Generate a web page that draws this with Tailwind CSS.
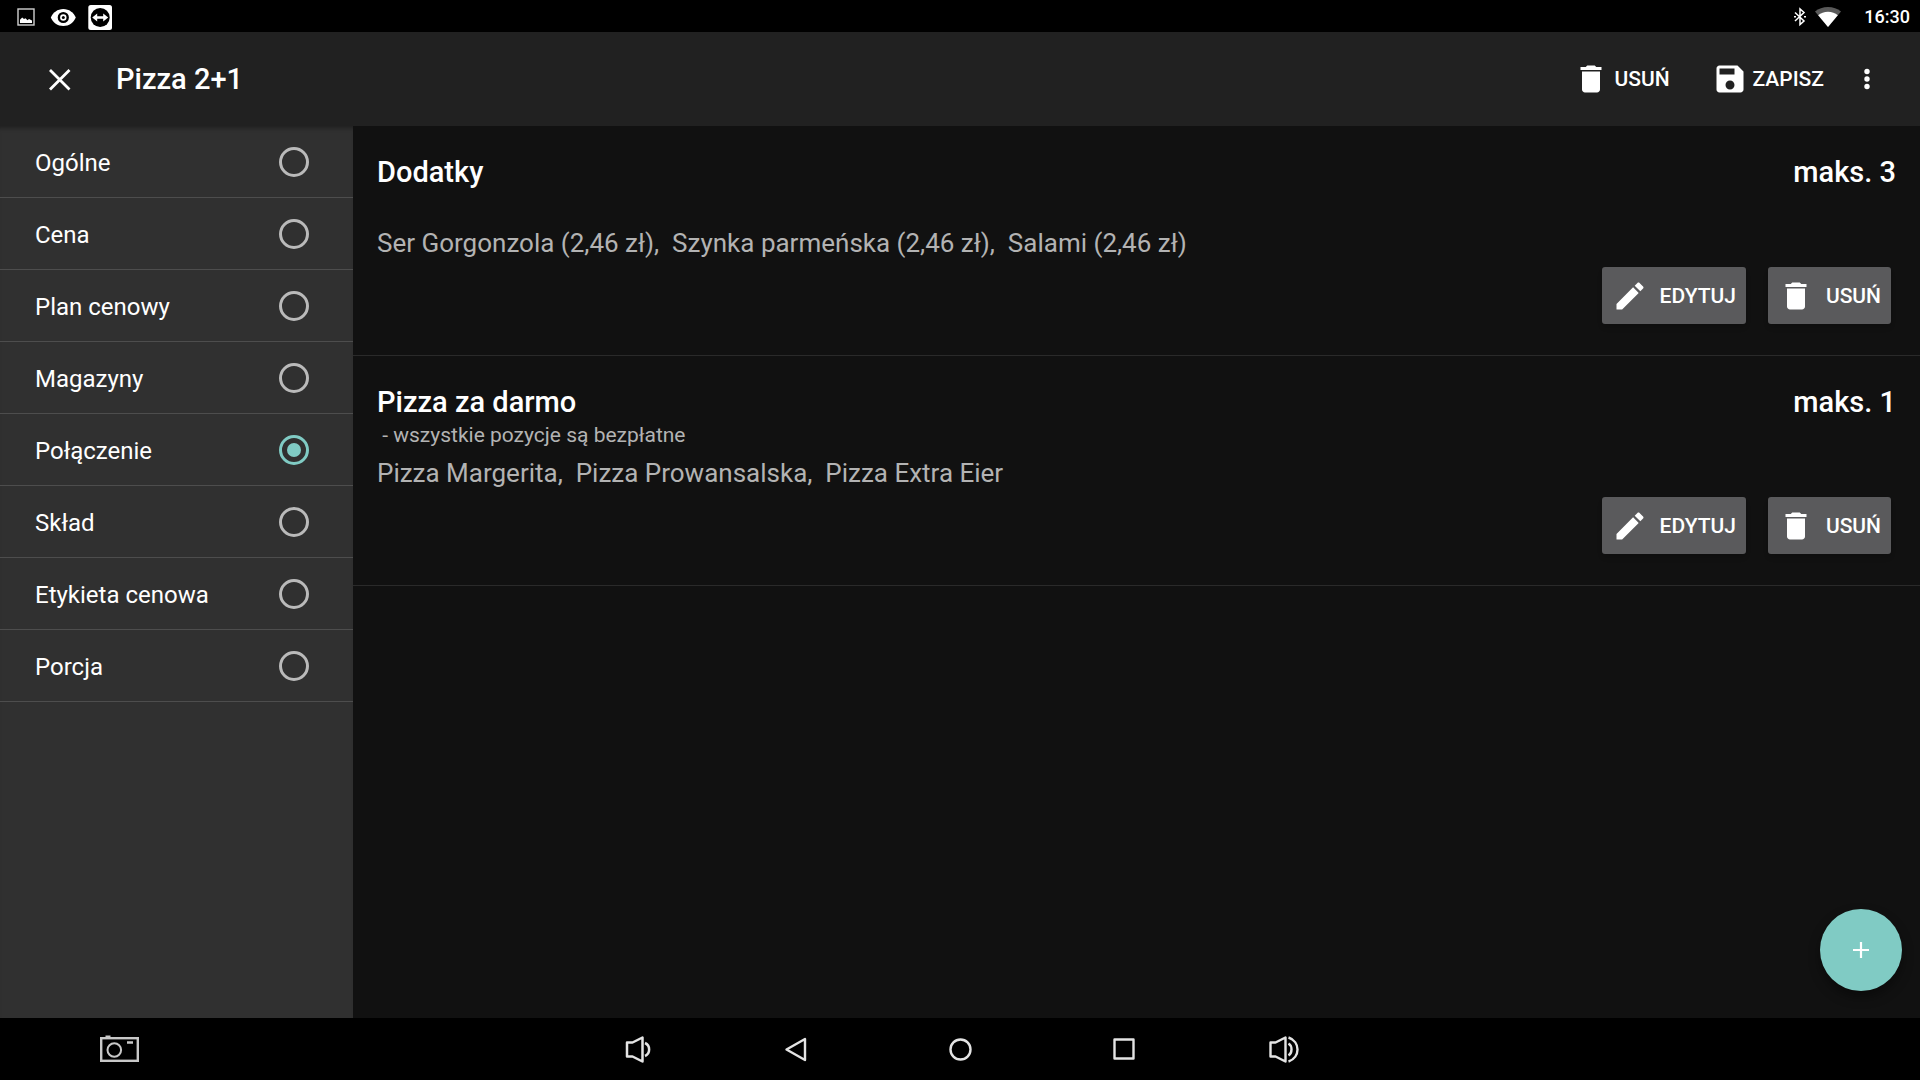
<!DOCTYPE html>
<html lang="pl">
<head>
    <meta charset="UTF-8">
    <meta name="viewport" content="width=device-width, initial-scale=1.0">
    <title>Pizza 2+1</title>
    <script src="https://cdn.jsdelivr.net/npm/@tailwindcss/browser@4"></script>
</head>
<body class="h-screen flex flex-col overflow-hidden bg-[#111111] text-white font-['Roboto',sans-serif]">
    <!-- Shared icons -->
    <svg class="hidden">
        <symbol id="icon-delete" viewBox="0 0 24 24"><path d="M6 19c0 1.1.9 2 2 2h8c1.1 0 2-.9 2-2V7H6v12zM19 4h-3.5l-1-1h-5l-1 1H5v2h14V4z"/></symbol>
        <symbol id="icon-edit" viewBox="0 0 24 24"><path d="M3 17.25V21h3.75L17.81 9.94l-3.75-3.75L3 17.25zM20.71 7.04c.39-.39.39-1.02 0-1.41l-2.34-2.34c-.39-.39-1.02-.39-1.41 0l-1.83 1.83 3.75 3.75 1.83-1.83z"/></symbol>
        <symbol id="icon-save" viewBox="0 0 24 24"><path d="M17 3H5c-1.11 0-2 .9-2 2v14c0 1.1.89 2 2 2h14c1.1 0 2-.9 2-2V7l-4-4zm-5 16c-1.66 0-3-1.34-3-3s1.34-3 3-3 3 1.34 3 3-1.34 3-3 3zm3-10H5V5h10v4z"/></symbol>
    </svg>

    <!-- Status bar -->
    <div class="h-8 shrink-0 bg-black flex items-center justify-between pt-px pl-4 pr-[10px]">
        <div class="flex items-center gap-3">
            <svg class="w-5 h-5" viewBox="0 0 20 20" fill="none">
                <rect x="2" y="2" width="16" height="16" stroke="#d0d0d0" stroke-width="1.4"/>
                <path fill="#fff" d="M4 16v-3.200l2.200-2.200 1.800 1.400 1.500-.8 2 2 1.500-1.200 3 1.500V16z"/>
            </svg>
            <svg class="w-7 h-7" viewBox="0 0 28 28">
                <path fill="#fff" d="M2.800 14.500C5 9.500 9.500 6 15.300 6s10.300 3.500 12.500 8.500C25.600 19.500 21.100 23 15.300 23S5 19.500 2.800 14.500z"/>
                <circle cx="15.300" cy="14.500" r="4.400" fill="#fff" stroke="#000" stroke-width="2.400"/>
                <circle cx="15.300" cy="14.500" r="1.500" fill="#000"/>
            </svg>
            <svg class="w-6 h-7" viewBox="0 0 24 28">
                <rect x="0.300" y="2" width="23.700" height="25" rx="2.500" fill="#fff"/>
                <circle cx="12.200" cy="14.500" r="9.500" fill="#000"/>
                <path fill="#fff" d="M4.200 14.500l5-4v2.700h6v-2.700l5 4-5 4v-2.700h-6v2.700z"/>
            </svg>
        </div>
        <div class="flex items-center">
            <svg class="w-3 h-5" viewBox="0 0 12 20" fill="none" stroke="#fff" stroke-width="1.500">
                <path d="M1 5.500l9 8.500-4 3.500V2L10 5.500l-9 8.500"/>
                <path d="M0 9.800h2M10 9.800h2"/>
            </svg>
            <svg class="w-7 h-6 ml-2" viewBox="0 0 28 24">
                <path fill="#5a5a5a" d="M14 22L1 6.500C4.500 3.600 9 2 14 2s9.500 1.600 13 4.500z"/>
                <path fill="#fff" d="M14 22L4.200 10.200C6.800 8 10.200 6.800 14 6.800s7.200 1.200 9.800 3.400z"/>
            </svg>
            <span class="ml-[22px] text-[18px] leading-6 font-medium">16:30</span>
        </div>
    </div>

    <!-- App bar -->
    <header class="h-[94px] shrink-0 bg-[#212121] flex items-center pl-11 pr-[38px]">
        <button aria-label="Zamknij">
            <svg class="w-8 h-8" viewBox="0 0 32 32" stroke="#fff" stroke-width="2.800"><path d="M6 7l19.500 19.500M25.500 7L6 26.500"/></svg>
        </button>
        <h1 class="ml-10 pt-[2px] text-[29px] font-medium">Pizza 2+1</h1>
        <div class="ml-auto flex items-center">
            <button class="flex items-center gap-[5px] text-[21px] font-medium">
                <svg class="w-9 h-9 fill-white"><use href="#icon-delete"/></svg>
                <span class="pt-[2px]">USUŃ</span>
            </button>
            <button class="ml-[42px] flex items-center gap-[5px] text-[21px] font-medium">
                <svg class="w-9 h-9 fill-white"><use href="#icon-save"/></svg>
                <span class="pt-[2px]">ZAPISZ</span>
            </button>
            <button class="ml-7" aria-label="Więcej">
                <svg class="w-[30px] h-[30px]" viewBox="0 0 30 30" fill="#fff"><circle cx="15" cy="7.500" r="2.700"/><circle cx="15" cy="15" r="2.700"/><circle cx="15" cy="22.500" r="2.700"/></svg>
            </button>
        </div>
    </header>

    <div class="flex-1 flex min-h-0">
        <!-- Sidebar -->
        <nav class="w-[353px] shrink-0 bg-[#303030] text-[24px] shadow-[inset_0_5px_4px_-3px_rgba(0,0,0,0.35)]">
            <label class="h-18 flex items-center justify-between pl-[35px] pr-11 border-b border-[#4d4d4d]">
                <span class="pt-[2px]">Ogólne</span>
                <input type="radio" name="tab" class="appearance-none w-[30px] h-[30px] rounded-full border-3 border-[#bababa] p-[5px] bg-clip-content checked:border-[#80cbc4] checked:bg-[#80cbc4]">
            </label>
            <label class="h-18 flex items-center justify-between pl-[35px] pr-11 border-b border-[#4d4d4d]">
                <span class="pt-[2px]">Cena</span>
                <input type="radio" name="tab" class="appearance-none w-[30px] h-[30px] rounded-full border-3 border-[#bababa] p-[5px] bg-clip-content checked:border-[#80cbc4] checked:bg-[#80cbc4]">
            </label>
            <label class="h-18 flex items-center justify-between pl-[35px] pr-11 border-b border-[#4d4d4d]">
                <span class="pt-[2px]">Plan cenowy</span>
                <input type="radio" name="tab" class="appearance-none w-[30px] h-[30px] rounded-full border-3 border-[#bababa] p-[5px] bg-clip-content checked:border-[#80cbc4] checked:bg-[#80cbc4]">
            </label>
            <label class="h-18 flex items-center justify-between pl-[35px] pr-11 border-b border-[#4d4d4d]">
                <span class="pt-[2px]">Magazyny</span>
                <input type="radio" name="tab" class="appearance-none w-[30px] h-[30px] rounded-full border-3 border-[#bababa] p-[5px] bg-clip-content checked:border-[#80cbc4] checked:bg-[#80cbc4]">
            </label>
            <label class="h-18 flex items-center justify-between pl-[35px] pr-11 border-b border-[#4d4d4d]">
                <span class="pt-[2px]">Połączenie</span>
                <input type="radio" name="tab" checked class="appearance-none w-[30px] h-[30px] rounded-full border-3 border-[#bababa] p-[5px] bg-clip-content checked:border-[#80cbc4] checked:bg-[#80cbc4]">
            </label>
            <label class="h-18 flex items-center justify-between pl-[35px] pr-11 border-b border-[#4d4d4d]">
                <span class="pt-[2px]">Skład</span>
                <input type="radio" name="tab" class="appearance-none w-[30px] h-[30px] rounded-full border-3 border-[#bababa] p-[5px] bg-clip-content checked:border-[#80cbc4] checked:bg-[#80cbc4]">
            </label>
            <label class="h-18 flex items-center justify-between pl-[35px] pr-11 border-b border-[#4d4d4d]">
                <span class="pt-[2px]">Etykieta cenowa</span>
                <input type="radio" name="tab" class="appearance-none w-[30px] h-[30px] rounded-full border-3 border-[#bababa] p-[5px] bg-clip-content checked:border-[#80cbc4] checked:bg-[#80cbc4]">
            </label>
            <label class="h-18 flex items-center justify-between pl-[35px] pr-11 border-b border-[#4d4d4d]">
                <span class="pt-[2px]">Porcja</span>
                <input type="radio" name="tab" class="appearance-none w-[30px] h-[30px] rounded-full border-3 border-[#bababa] p-[5px] bg-clip-content checked:border-[#80cbc4] checked:bg-[#80cbc4]">
            </label>
        </nav>

        <!-- Combo groups -->
        <main class="relative flex-1">
            <section class="pt-[25px] pb-[31px] border-b border-[#2a2a2a]">
                <div class="flex justify-between min-h-[68px] px-6">
                    <h2 class="text-[29px] leading-[42px] font-medium">Dodatky</h2>
                    <span class="text-[29px] leading-[42px] font-medium">maks. 3</span>
                </div>
                <p class="mt-1 pl-6 text-[26px] leading-10 text-[#b3b3b3] whitespace-pre">Ser Gorgonzola (2,46 zł),  Szynka parmeńska (2,46 zł),  Salami (2,46 zł)</p>
                <div class="mt-1 flex justify-end gap-[22px] pr-[29px]">
                    <button class="h-[57px] flex items-center gap-3 px-[10px] rounded-[3px] bg-[#5a5a5c] text-[21px] font-medium shadow-md">
                        <svg class="w-9 h-9 fill-white"><use href="#icon-edit"/></svg>
                        <span class="pt-[2px]">EDYTUJ</span>
                    </button>
                    <button class="h-[57px] flex items-center gap-3 px-[10px] rounded-[3px] bg-[#5a5a5c] text-[21px] font-medium shadow-md">
                        <svg class="w-9 h-9 fill-white"><use href="#icon-delete"/></svg>
                        <span class="pt-[2px]">USUŃ</span>
                    </button>
                </div>
            </section>

            <section class="pt-[25px] pb-[31px] border-b border-[#2a2a2a]">
                <div class="flex justify-between min-h-[68px] px-6">
                    <div>
                        <h2 class="text-[29px] leading-[42px] font-medium">Pizza za darmo</h2>
                        <p class="text-[21px] leading-6 text-[#b3b3b3] whitespace-pre"> - wszystkie pozycje są bezpłatne</p>
                    </div>
                    <span class="text-[29px] leading-[42px] font-medium">maks. 1</span>
                </div>
                <p class="mt-1 pl-6 text-[26px] leading-10 text-[#b3b3b3] whitespace-pre">Pizza Margerita,  Pizza Prowansalska,  Pizza Extra Eier</p>
                <div class="mt-1 flex justify-end gap-[22px] pr-[29px]">
                    <button class="h-[57px] flex items-center gap-3 px-[10px] rounded-[3px] bg-[#5a5a5c] text-[21px] font-medium shadow-md">
                        <svg class="w-9 h-9 fill-white"><use href="#icon-edit"/></svg>
                        <span class="pt-[2px]">EDYTUJ</span>
                    </button>
                    <button class="h-[57px] flex items-center gap-3 px-[10px] rounded-[3px] bg-[#5a5a5c] text-[21px] font-medium shadow-md">
                        <svg class="w-9 h-9 fill-white"><use href="#icon-delete"/></svg>
                        <span class="pt-[2px]">USUŃ</span>
                    </button>
                </div>
            </section>

            <!-- Floating add button -->
            <button class="absolute right-[18px] bottom-[27px] w-[82px] h-[82px] rounded-full bg-[#80cbc4] flex items-center justify-center shadow-[0_6px_12px_rgba(0,0,0,0.4)]" aria-label="Dodaj">
                <svg class="w-4 h-4" viewBox="0 0 16 16" stroke="#fff" stroke-width="2.200"><path d="M8 0v16M0 8h16"/></svg>
            </button>
        </main>
    </div>

    <!-- Navigation bar -->
    <footer class="h-[62px] shrink-0 bg-black grid grid-cols-[1fr_auto_1fr] items-center">
        <button class="ml-25 w-10 h-8" aria-label="Zrzut ekranu">
            <svg class="w-10 h-8" viewBox="0 0 40 32" fill="none" stroke="#c8c8c8">
                <rect x="1.200" y="5.200" width="36.600" height="22.600" stroke-width="2.400"/>
                <path d="M5.500 3.800h5M27 9.500h6" stroke-width="2.400"/>
                <circle cx="14.300" cy="17" r="6.800" stroke-width="2"/>
            </svg>
        </button>
        <div class="flex">
            <button class="w-[156px] flex justify-center" aria-label="Ciszej">
                <svg class="w-8 h-8" viewBox="0 0 32 32" fill="none" stroke="#e4e4e4" stroke-width="2.500" stroke-linejoin="round">
                    <path d="M7 9.500h5.500L22.500 4.500v24L12.500 23.500H7z"/><path d="M25 10c5.500 2.500 5.500 10.500 0 13"/>
                </svg>
            </button>
            <button class="w-[164px] flex justify-center" aria-label="Wstecz">
                <svg class="w-8 h-8" viewBox="0 0 32 32" fill="none" stroke="#e4e4e4" stroke-width="2.400" stroke-linejoin="round"><path d="M6.500 16.500L25 6v21z"/></svg>
            </button>
            <button class="w-[164px] flex justify-center" aria-label="Ekran główny">
                <svg class="w-8 h-8" viewBox="0 0 32 32" fill="none" stroke="#e4e4e4" stroke-width="2.400"><circle cx="16.500" cy="16.500" r="10"/></svg>
            </button>
            <button class="w-[164px] flex justify-center" aria-label="Ostatnie">
                <svg class="w-8 h-8" viewBox="0 0 32 32" fill="none" stroke="#e4e4e4" stroke-width="2.400" stroke-linejoin="round"><rect x="6.500" y="6.500" width="19" height="19"/></svg>
            </button>
            <button class="w-[156px] flex justify-center" aria-label="Głośniej">
                <svg class="w-8 h-8" viewBox="0 0 32 32" fill="none" stroke="#e4e4e4" stroke-width="2.400" stroke-linejoin="round">
                    <path d="M2.500 9.500h5L17.500 4.500v24L7.500 23.500h-5z"/><path d="M20.500 10.500c4 2.500 4 9.500 0 12"/><path d="M20.500 4.500c12 4 12 20 0 24"/>
                </svg>
            </button>
        </div>
    </footer>
</body>
</html>
